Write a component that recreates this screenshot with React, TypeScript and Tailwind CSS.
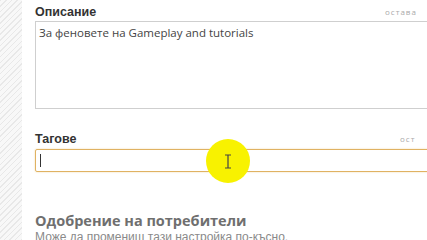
export default function App() {
  return (
    <div className="relative flex h-[240px] w-[427px] overflow-hidden bg-white font-['Open_Sans',sans-serif]">
      <div className="w-[22px] shrink-0 bg-[repeating-linear-gradient(135deg,#e8e8e8_0px,#e8e8e8_1px,#f8f8f8_1px,#f8f8f8_4px)]" />
      <div className="flex min-w-0 flex-1 flex-col pl-[13px] pt-[4px]">
        <div className="flex h-[16px] items-center justify-between">
          <span className="font-['Liberation_Sans',sans-serif] text-[12.5px] font-bold leading-[16px] text-[#333]">Описание</span>
          <span className="w-[42px] shrink-0 whitespace-nowrap text-[8px] leading-[16px] tracking-[1px] text-[#aaa]">остава</span>
        </div>
        <div className="mt-[1px] h-[88px] w-[400px] shrink-0 border border-[#cfcfcf] px-[3px] pt-[2px] text-[11.5px] text-[#444]">
          За феновете на Gameplay and tutorials
        </div>

        <div className="mt-[22px] flex h-[16px] items-center justify-between">
          <span className="font-['Liberation_Sans',sans-serif] text-[12.5px] font-bold leading-[16px] text-[#333]">Тагове</span>
          <span className="w-[27px] shrink-0 whitespace-nowrap text-[8px] leading-[16px] tracking-[1px] text-[#aaa]">ост</span>
        </div>
        <div className="mt-[2px] flex h-[23px] w-[400px] shrink-0 items-center rounded-[2px] border-[1.5px] border-[#e0b262] px-[4px] shadow-[0_0_2px_#f0d9a8]">
          <span className="h-[13px] w-[1px] bg-[#333]" />
        </div>

        <div className="mt-[21px] h-px w-[400px] bg-[#ddd]" />

        <div className="mt-[19px] text-[14.5px] font-bold leading-[18px] text-[#6f6f6f]">Одобрение на потребители</div>
        <div className="whitespace-nowrap font-['Liberation_Sans',sans-serif] text-[12px] leading-[14px] text-[#8a8a8a]">Може да промениш тази настройка по-късно.</div>
      </div>

      <div className="absolute left-[206px] top-[139px] flex h-[44px] w-[44px] items-center justify-center rounded-full bg-[#f8f200]">
        <svg width="8" height="15" viewBox="0 0 8 15" fill="none" stroke="#444" strokeWidth="1.2">
          <path d="M1 1h6M1 14h6M4 1v13" />
        </svg>
      </div>
    </div>
  )
}
